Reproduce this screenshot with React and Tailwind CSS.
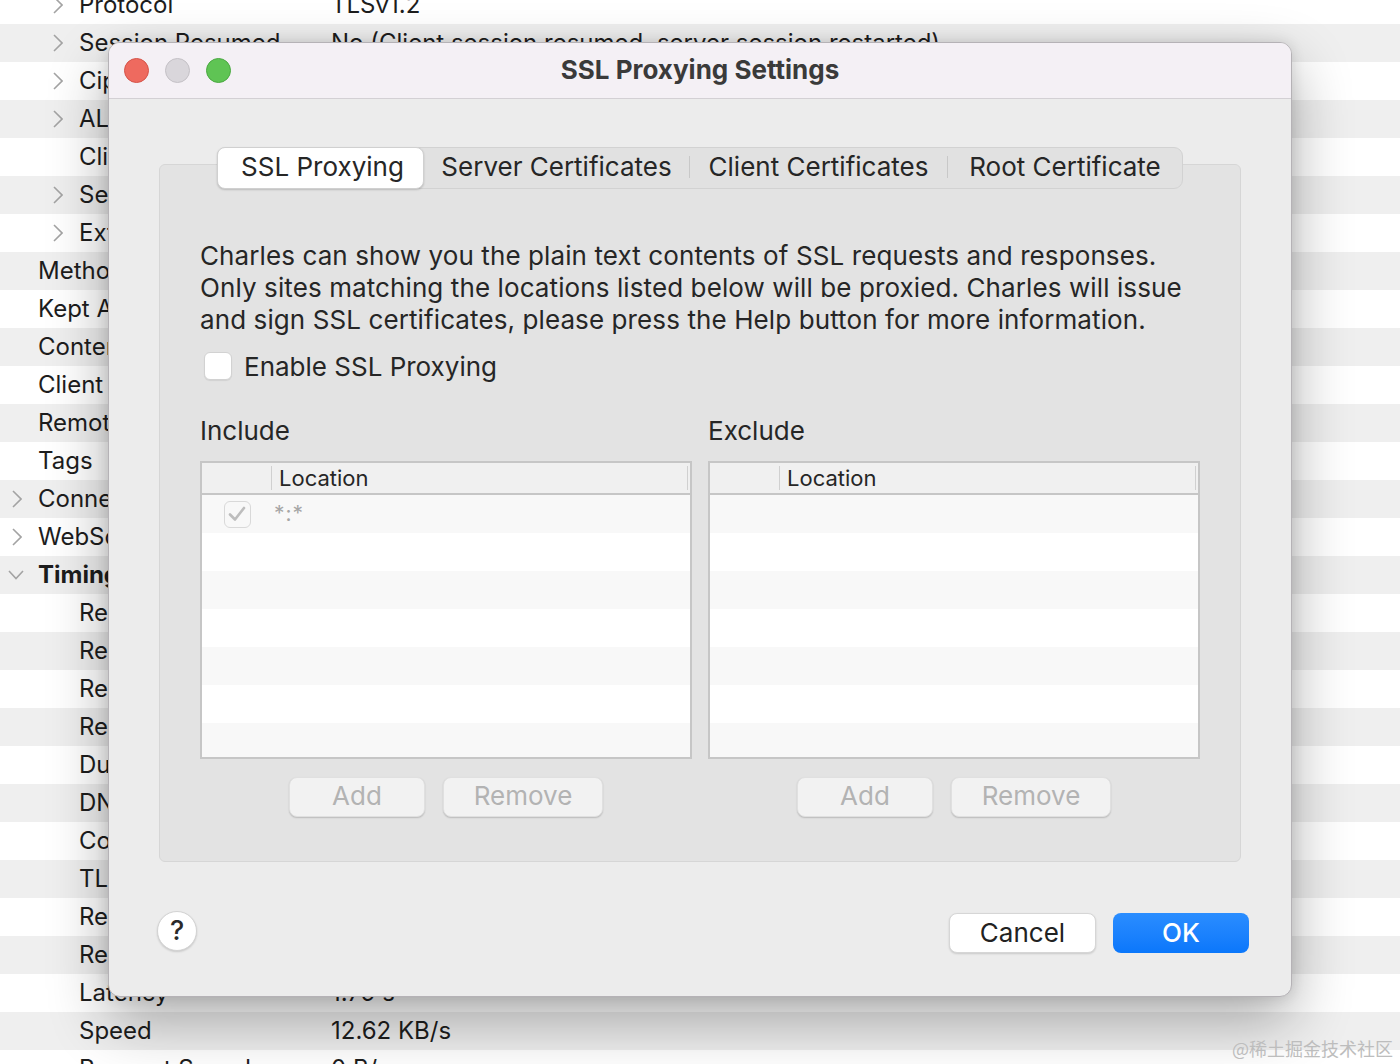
import React from "react";

const rows = [
  { label: "Protocol", value: "TLSv1.2", level: 2, chev: "right" },
  { label: "Session Resumed", value: "No (Client session resumed, server session restarted)", level: 2, chev: "right" },
  { label: "Cipher Suite", value: "TLS_ECDHE_RSA_WITH_AES_128_GCM_SHA256", level: 2, chev: "right" },
  { label: "ALPN", value: "h2", level: 2, chev: "right" },
  { label: "Client Certificates", value: "-", level: 2 },
  { label: "Server Certificates", value: "2", level: 2, chev: "right" },
  { label: "Extensions", value: "", level: 2, chev: "right" },
  { label: "Method", value: "GET", level: 1 },
  { label: "Kept Alive", value: "No", level: 1 },
  { label: "Content-Type", value: "application/json", level: 1 },
  { label: "Client Address", value: "127.0.0.1:52814", level: 1 },
  { label: "Remote Address", value: "juejin.cn/110.242.70.25:443", level: 1 },
  { label: "Tags", value: "-", level: 1 },
  { label: "Connection", value: "", level: 1, chev: "right" },
  { label: "WebSockets", value: "-", level: 1, chev: "right" },
  { label: "Timing", value: "", level: 1, chev: "down", bold: true },
  { label: "Request Start Time", value: "22/11/23 10:41:18", level: 2 },
  { label: "Request End Time", value: "22/11/23 10:41:18", level: 2 },
  { label: "Response Start Time", value: "22/11/23 10:41:20", level: 2 },
  { label: "Response End Time", value: "22/11/23 10:41:20", level: 2 },
  { label: "Duration", value: "1.82 s", level: 2 },
  { label: "DNS", value: "4 ms", level: 2 },
  { label: "Connect", value: "18 ms", level: 2 },
  { label: "TLS Handshake", value: "26 ms", level: 2 },
  { label: "Request", value: "1 ms", level: 2 },
  { label: "Response", value: "2 ms", level: 2 },
  { label: "Latency", value: "1.79 s", level: 2 },
  { label: "Speed", value: "12.62 KB/s", level: 2 },
  { label: "Request Speed", value: "0 B/s", level: 2 },
];

function Chevron({ dir }) {
  if (dir === "down") {
    return (
      <svg width="16" height="10" viewBox="0 0 16 10" className="-ml-[4px] mr-[14px]">
        <polyline points="1,1 8,8.5 15,1" fill="none" stroke="#a3a3a3" strokeWidth="1.6" />
      </svg>
    );
  }
  if (dir === "right") {
    return (
      <svg width="10" height="18" viewBox="0 0 10 18" className="mr-[16px]">
        <polyline points="1,1 9,9 1,17" fill="none" stroke="#a3a3a3" strokeWidth="1.6" />
      </svg>
    );
  }
  return <span className="w-[26px]" />;
}

function BackgroundList() {
  return (
    <div className="-mt-[14px] font-['Inter',sans-serif] text-[24px] text-[#1d1d1d]">
      {rows.map((r, i) => (
        <div
          key={r.label}
          className={`h-[38px] flex items-center ${i % 2 === 1 ? "bg-[#efefef]" : "bg-white"}`}
        >
          <div
            className={`w-[331px] shrink-0 flex items-center ${r.level === 2 ? "pl-[53px]" : "pl-[12px]"}`}
          >
            <Chevron dir={r.chev} />
            <span className={r.bold ? "font-bold" : ""}>{r.label}</span>
          </div>
          <span>{r.value}</span>
        </div>
      ))}
    </div>
  );
}

function SmallCheck() {
  return (
    <div className="w-[27px] h-[27px] rounded-[6px] border border-[#d9d9d9] bg-[#f8f8f8] flex items-center justify-center">
      <svg width="18" height="16" viewBox="0 0 18 16">
        <polyline points="2,8.5 7,13.5 16,2" fill="none" stroke="#bdbdbd" strokeWidth="2.6" strokeLinecap="round" strokeLinejoin="round" />
      </svg>
    </div>
  );
}

function LocationTable({ entries }) {
  const stripes = [0, 1, 2, 3, 4, 5, 6];
  return (
    <div className="h-[298px] border-2 border-[#c6c6c6] bg-white flex flex-col overflow-hidden">
      <div className="h-[32px] shrink-0 flex items-center bg-[#f0f0f0] border-b-2 border-[#c6c6c6] relative">
        <div className="w-[70px] h-[24px] border-r border-[#d0d0d0]" />
        <span className="pl-[7px] text-[22px] text-[#262626]">Location</span>
        <div className="absolute right-[2px] top-[3px] h-[24px] border-r border-[#d0d0d0]" />
      </div>
      {stripes.map((s) => {
        const e = entries[s];
        return (
          <div
            key={s}
            className={`h-[38px] shrink-0 flex items-center ${s % 2 === 0 ? "bg-[#f8f8f8]" : "bg-white"}`}
          >
            {e && (
              <>
                <div className="w-[70px] flex justify-center">
                  <SmallCheck />
                </div>
                <span className="pl-[2px] text-[21px] text-[#a6a6a6] tracking-[1px]">{e}</span>
              </>
            )}
          </div>
        );
      })}
    </div>
  );
}

function GrayButton({ children, w }) {
  return (
    <div
      className={`${w} h-[40px] pb-[3px] rounded-[8px] bg-[#f2f2f2] border border-[#e0e0e0] shadow-[0_1px_1.5px_rgba(0,0,0,0.18)] flex items-center justify-center text-[26px] text-[#b3b3b3]`}
    >
      {children}
    </div>
  );
}

function Panel({ title, entries }) {
  return (
    <div className="flex-1 flex flex-col">
      <div className="h-[32px] leading-[32px] text-[26px] text-[#262626] mb-[14px]">{title}</div>
      <LocationTable entries={entries} />
      <div className="mt-[18px] flex justify-center gap-[18px]">
        <GrayButton w="w-[136px]">Add</GrayButton>
        <GrayButton w="w-[160px]">Remove</GrayButton>
      </div>
    </div>
  );
}

function Tabs() {
  return (
    <div className="mx-auto -mt-[18px] w-[966px] h-[42px] pb-[3px] rounded-[9px] bg-[#e1e1e1] border border-[#d2d2d2] flex items-center text-[26px] text-[#262626]">
      <div className="w-[207px] h-[42px] -mb-[2px] -ml-px pb-[3px] rounded-[8px] bg-white border border-[#d0d0d0] shadow-[0_1px_2px_rgba(0,0,0,0.18)] flex items-center justify-center pl-[4px]">
        SSL Proxying
      </div>
      <div className="w-[265px] flex items-center justify-center">Server Certificates</div>
      <div className="h-[22px] border-l border-[#c8c8c8]" />
      <div className="w-[257px] flex items-center justify-center">Client Certificates</div>
      <div className="h-[22px] border-l border-[#c8c8c8]" />
      <div className="flex-1 flex items-center justify-center">Root Certificate</div>
    </div>
  );
}

function Dialog() {
  return (
    <div className="absolute left-[108px] top-[42px] w-[1184px] h-[955px] rounded-[12px] bg-[#ececec] border border-[#b5b2b6] shadow-[0_24px_60px_rgba(0,0,0,0.32),0_0_14px_rgba(0,0,0,0.12)] overflow-hidden flex flex-col font-['Inter',sans-serif]">
      <div className="h-[56px] shrink-0 bg-[#f4f0f5] border-b border-[#d3d0d4] flex items-center relative">
        <div className="flex items-center gap-[16px] pl-[15px]">
          <span className="w-[25px] h-[25px] rounded-full bg-[#ee6a5f] border border-[#d55349]" />
          <span className="w-[25px] h-[25px] rounded-full bg-[#d9d6db] border border-[#c4c1c6]" />
          <span className="w-[25px] h-[25px] rounded-full bg-[#5fc454] border border-[#4aa941]" />
        </div>
        <div className="absolute inset-0 pb-[3px] flex items-center justify-center text-[26px] font-bold text-[#3a3a3a]">
          SSL Proxying Settings
        </div>
      </div>

      <div className="flex-1 flex flex-col px-[50px] pt-[65px]">
        <div className="h-[698px] shrink-0 rounded-[6px] bg-[#e3e3e3] border border-[#d6d6d6] flex flex-col">
          <Tabs />
          <div className="px-[40px] pt-[51px]">
            <p className="text-[26px] leading-[32px] text-[#262626] whitespace-nowrap tracking-[0.1px]">
              Charles can show you the plain text contents of SSL requests and responses.
              <br />
              Only sites matching the locations listed below will be proxied. Charles will issue
              <br />
              and sign SSL certificates, please press the Help button for more information.
            </p>
            <div className="mt-[14px] h-[32px] flex items-center gap-[12px] pl-[4px]">
              <div className="w-[28px] h-[28px] rounded-[6px] bg-white border border-[#d2d2d2] shadow-[0_1px_1px_rgba(0,0,0,0.08)]" />
              <span className="text-[26px] text-[#262626]">Enable SSL Proxying</span>
            </div>
            <div className="mt-[33px] flex gap-[16px]">
              <Panel title="Include" entries={["*:*"]} />
              <Panel title="Exclude" entries={[]} />
            </div>
          </div>
        </div>

        <div className="mt-[51px] flex items-center">
          <div className="-ml-[2px] -mt-[4px] w-[40px] h-[40px] rounded-full bg-white border border-[#d3d3d3] shadow-[0_1px_2px_rgba(0,0,0,0.15)] flex items-center justify-center text-[27px] font-medium text-[#2a2a2a]">
            ?
          </div>
          <div className="flex-1" />
          <div className="w-[147px] h-[40px] pb-[2px] rounded-[8px] bg-white border border-[#d6d6d6] shadow-[0_1px_2px_rgba(0,0,0,0.15)] flex items-center justify-center text-[26px] text-[#222]">
            Cancel
          </div>
          <div className="ml-[17px] -mr-[8px] w-[136px] h-[40px] pb-[2px] rounded-[8px] bg-gradient-to-b from-[#2a8dff] to-[#0a77fb] flex items-center justify-center text-[26px] text-white font-medium">
            OK
          </div>
        </div>
      </div>
    </div>
  );
}

export default function App() {
  return (
    <div className="relative w-[1400px] h-[1064px] overflow-hidden bg-white">
      <BackgroundList />
      <Dialog />
      <div className="absolute right-[7px] top-[1035px] text-[18px] text-[#bdbdbd] font-['Noto_Sans_CJK_SC',sans-serif] whitespace-nowrap">
        @稀土掘金技术社区
      </div>
    </div>
  );
}
